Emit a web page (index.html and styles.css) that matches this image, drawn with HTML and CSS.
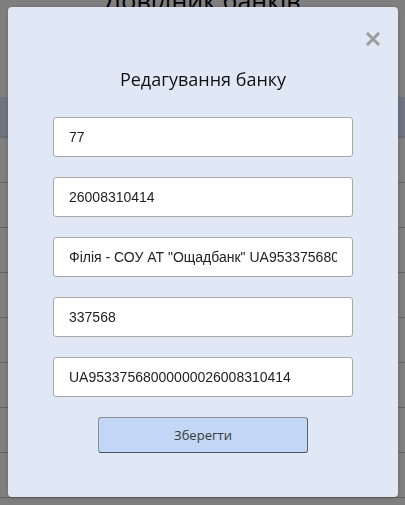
FILE: index.html
```html
<!DOCTYPE html>
<html lang="uk">
<head>
<meta charset="utf-8">
<link rel="stylesheet" href="styles.css">
</head>
<body>
<div class="page">
  <h1 class="page-title">Довідник банків</h1>
  <table class="banks">
    <thead><tr><th>МФО</th><th>Рахунок</th><th>Назва</th><th>Код</th></tr></thead>
    <tbody>
      <tr><td>77</td><td>26008310414</td><td>Філія</td><td class="g">Ощадбанк</td></tr>
      <tr><td>78</td><td>26008310415</td><td>Філія</td><td class="b">Ощадбанк</td></tr>
      <tr><td>79</td><td>26008310416</td><td>Філія</td><td class="b">Ощадбанк</td></tr>
      <tr><td>80</td><td>26008310417</td><td>Філія</td><td class="b">Ощадбанк</td></tr>
      <tr><td>81</td><td>26008310418</td><td>Філія</td><td>4900</td></tr>
      <tr><td>82</td><td>26008310419</td><td>Філія</td><td></td></tr>
      <tr><td>83</td><td>26008310420</td><td>Філія</td><td>2100</td></tr>
      <tr><td>84</td><td>26008310421</td><td>Філія</td><td></td></tr>
    </tbody>
  </table>
</div>
<div class="overlay"></div>
<div class="modal">
  <button class="close" type="button" aria-label="Закрити">
    <svg width="14" height="14" viewBox="0 0 14 14"><path d="M2 2 L12 12 M12 2 L2 12" stroke="#9b9b9b" stroke-width="3" stroke-linecap="square" fill="none"/></svg>
  </button>
  <h2 class="modal-title">Редагування банку</h2>
  <form class="form">
    <input class="field" type="text" value="77">
    <input class="field" type="text" value="26008310414">
    <input class="field" type="text" value="Філія - СОУ АТ &quot;Ощадбанк&quot; UA953375680000000026008310414">
    <input class="field" type="text" value="337568">
    <input class="field" type="text" value="UA95337568000000026008310414">
    <button class="save" type="button">Зберегти</button>
  </form>
</div>
</body>
</html>
```
FILE: styles.css
```css
html, body {
  margin: 0;
  padding: 0;
  background: #ffffff;
  overflow: hidden;
  height: 505px;
}
.page {
  font-family: "Open Sans", sans-serif;
}
.page-title {
  margin: -18px 0 0;
  font-family: "Open Sans", sans-serif;
  font-weight: 400;
  font-size: 25px;
  line-height: 36px;
  text-align: center;
  color: #000;
}
.banks {
  margin-top: 79px;
  width: 100%;
  border-collapse: collapse;
  font-size: 14px;
}
.banks th {
  height: 39px;
  background: #dde8ff;
  color: #fff;
  border-bottom: 2px solid #d0d8ee;
  text-align: left;
  padding: 0 8px;
}
.banks td {
  height: 44px;
  border-bottom: 1px solid #c8c8c8;
  padding: 0 8px;
  color: #222;
  background: #fff;
}
.banks td.g { color: #2a7a3a; }
.banks td.b { color: #1a3a8a; }
.overlay {
  position: fixed;
  inset: 0;
  background: rgba(0, 0, 0, 0.5);
}
.modal {
  position: fixed;
  top: 7px;
  left: 8px;
  width: 390px;
  height: 490px;
  box-sizing: border-box;
  background: #e1e8f5;
  border-radius: 4px;
  padding: 60px 45px 0;
  box-shadow: 0 1px 4px rgba(0, 0, 0, 0.2);
}
.close {
  position: absolute;
  top: 25px;
  right: 18px;
  width: 14px;
  height: 14px;
  padding: 0;
  border: 0;
  background: transparent;
  display: block;
  cursor: pointer;
}
.close svg {
  display: block;
}
.modal-title {
  margin: 0 0 26px;
  font-family: "Open Sans", sans-serif;
  font-weight: 500;
  font-size: 18px;
  line-height: 24px;
  text-align: center;
  color: #111;
}
.form {
  display: flex;
  flex-direction: column;
  gap: 20px;
  align-items: center;
}
.field {
  width: 300px;
  height: 40px;
  box-sizing: border-box;
  border: 1px solid #a8a8a8;
  border-radius: 3px;
  background: #fff;
  padding: 0 15px;
  font-family: "Liberation Sans", Arial, sans-serif;
  font-size: 14px;
  color: #222;
  outline: none;
}
.save {
  width: 210px;
  height: 36px;
  box-sizing: border-box;
  background: #c2d6f5;
  border: 1px solid #8a9098;
  border-bottom-color: #4a5060;
  border-right-color: #5a606c;
  border-radius: 3px;
  font-family: "Open Sans", sans-serif;
  font-size: 13px;
  color: #3a3a3a;
  cursor: pointer;
}
```
